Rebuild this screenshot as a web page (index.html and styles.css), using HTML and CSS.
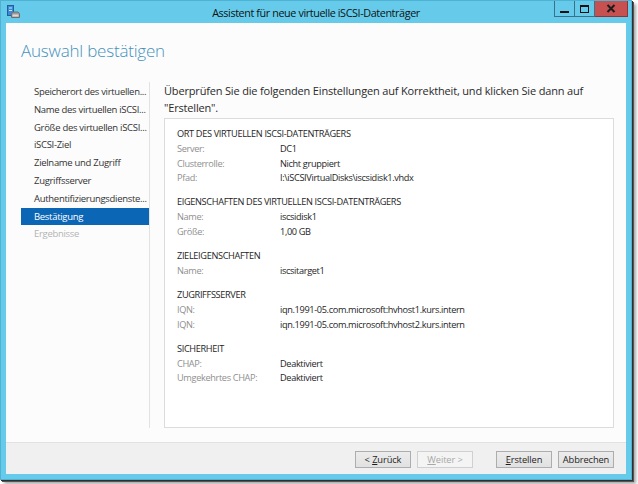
FILE: index.html
```html
<!DOCTYPE html>
<html lang="de">
<head>
<meta charset="utf-8">
<title>Assistent für neue virtuelle iSCSI-Datenträger</title>
<link rel="stylesheet" href="styles.css">
</head>
<body>
<div class="window">
  <div class="titlebar">
    <div class="tb-left">
      <svg class="app-icon" width="13" height="13" viewBox="0 0 13 13">
        <rect x="0.5" y="0.5" width="6" height="10" fill="#3b8ad6" stroke="#1f5f9e" stroke-width="1"/>
        <rect x="2" y="2.5" width="3" height="1" fill="#cfe6fb"/>
        <rect x="2" y="5" width="3" height="1" fill="#cfe6fb"/>
        <path d="M4.5 8.5 L6.5 7 H11 L12.5 8.5 V12.5 H4.5 Z" fill="#9a9a9a" stroke="#6e6e6e" stroke-width="1"/>
        <rect x="5.5" y="9.5" width="6" height="2" fill="#d9d9d9"/>
      </svg>
    </div>
    <div class="tb-title">Assistent für neue virtuelle iSCSI-Datenträger</div>
    <div class="tb-controls">
      <div class="ctl ctl-min"><span class="glyph-min"></span></div>
      <div class="ctl ctl-max"><span class="glyph-max"></span></div>
      <div class="ctl ctl-close">
        <svg width="10" height="9" viewBox="0 0 10 9"><path d="M1.5 1 L8.5 8 M8.5 1 L1.5 8" stroke="#1c1c1c" stroke-width="2"/></svg>
      </div>
    </div>
  </div>
  <div class="client">
    <h1 class="page-title">Auswahl bestätigen</h1>
    <div class="main">
      <nav class="steps">
        <div class="step">Speicherort des virtuellen...</div>
        <div class="step">Name des virtuellen iSCSI...</div>
        <div class="step">Größe des virtuellen iSCSI...</div>
        <div class="step">iSCSI-Ziel</div>
        <div class="step">Zielname und Zugriff</div>
        <div class="step">Zugriffsserver</div>
        <div class="step">Authentifizierungsdienste...</div>
        <div class="step active">Bestätigung</div>
        <div class="step disabled">Ergebnisse</div>
      </nav>
      <div class="divider"></div>
      <section class="content">
        <p class="intro">Überprüfen Sie die folgenden Einstellungen auf Korrektheit, und klicken Sie dann auf "Erstellen".</p>
        <div class="summary">
          <div class="group">
            <div class="group-head">ORT DES VIRTUELLEN ISCSI-DATENTRÄGERS</div>
            <div class="row"><span class="label">Server:</span><span class="value">DC1</span></div>
            <div class="row"><span class="label">Clusterrolle:</span><span class="value">Nicht gruppiert</span></div>
            <div class="row"><span class="label">Pfad:</span><span class="value">I:\iSCSIVirtualDisks\iscsidisk1.vhdx</span></div>
          </div>
          <div class="group">
            <div class="group-head">EIGENSCHAFTEN DES VIRTUELLEN ISCSI-DATENTRÄGERS</div>
            <div class="row"><span class="label">Name:</span><span class="value">iscsidisk1</span></div>
            <div class="row"><span class="label">Größe:</span><span class="value">1,00 GB</span></div>
          </div>
          <div class="group">
            <div class="group-head">ZIELEIGENSCHAFTEN</div>
            <div class="row"><span class="label">Name:</span><span class="value">iscsitarget1</span></div>
          </div>
          <div class="group">
            <div class="group-head">ZUGRIFFSSERVER</div>
            <div class="row"><span class="label">IQN:</span><span class="value">iqn.1991-05.com.microsoft:hvhost1.kurs.intern</span></div>
            <div class="row"><span class="label">IQN:</span><span class="value">iqn.1991-05.com.microsoft:hvhost2.kurs.intern</span></div>
          </div>
          <div class="group">
            <div class="group-head">SICHERHEIT</div>
            <div class="row"><span class="label">CHAP:</span><span class="value">Deaktiviert</span></div>
            <div class="row"><span class="label">Umgekehrtes CHAP:</span><span class="value">Deaktiviert</span></div>
          </div>
        </div>
      </section>
    </div>
    <div class="footer">
      <button class="btn">&lt; <u>Z</u>urück</button>
      <button class="btn btn-disabled"><u>W</u>eiter &gt;</button>
      <button class="btn btn-gap"><u>E</u>rstellen</button>
      <button class="btn">Abbrechen</button>
    </div>
  </div>
</div>
</body>
</html>
```

FILE: styles.css
```css
* { box-sizing: border-box; }

html, body {
  margin: 0;
  padding: 0;
  background: #ffffff;
}

body {
  width: 638px;
  height: 484px;
  overflow: hidden;
  font-family: "Open Sans", "Noto Sans", sans-serif;
  color: #1e1e1e;
}

.window {
  width: 632px;
  height: 480px;
  background: #66cbea;
  border: 1px solid #4fb2d2;
  box-shadow: 1px 1px 0 #2f2f2f, 2px 2px 0 #555555, 4px 4px 3px rgba(0, 0, 0, 0.35);
  display: flex;
  flex-direction: column;
}

.titlebar {
  height: 22px;
  display: grid;
  grid-template-columns: 1fr auto 1fr;
  align-items: start;
}

.tb-left {
  padding: 4px 0 0 6px;
}

.app-icon { display: block; }

.tb-title {
  font-size: 10.8px;
  line-height: 23px;
  color: #111111;
  white-space: nowrap;
  letter-spacing: -0.4px;
}

.tb-controls {
  display: flex;
  justify-content: flex-end;
  padding-right: 3px;
}

.ctl {
  height: 16px;
  display: flex;
  align-items: center;
  justify-content: center;
  border: 1px solid #3a7088;
  border-top: none;
}

.ctl-min { width: 21px; }
.ctl-max { width: 20px; border-left: none; }
.ctl-close {
  width: 33px;
  background: #c75050;
  border-color: #8d3535;
  border-left: none;
}

.glyph-min {
  display: block;
  width: 9px;
  height: 2px;
  background: #111;
  margin-top: 6px;
}

.glyph-max {
  display: block;
  width: 9px;
  height: 8px;
  border: 1px solid #111;
  border-top-width: 2px;
}

.client {
  flex: 1;
  margin: 0 5px 5px 5px;
  background: #fcfcfc;
  display: flex;
  flex-direction: column;
}

.page-title {
  margin: 0;
  padding: 16px 0 0 15px;
  height: 59px;
  font-size: 17px;
  font-weight: 300;
  line-height: 24px;
  color: #4592bc;
  letter-spacing: -0.2px;
}

.main {
  flex: 1;
  display: flex;
  min-height: 0;
}

.steps {
  width: 143px;
  padding: 1px 0 0 15px;
  font-size: 9.5px;
  letter-spacing: -0.3px;
}

.step {
  height: 17.8px;
  line-height: 17.8px;
  padding-left: 13px;
  color: #333333;
  white-space: nowrap;
}

.step.active {
  background: #0b66b5;
  color: #ffffff;
}

.step.disabled {
  color: #b4b4b4;
}

.divider {
  width: 1px;
  height: 346px;
  background: #e2e2e2;
}

.content {
  flex: 1;
  padding: 0 12px 0 14px;
  display: flex;
  flex-direction: column;
}

.intro {
  margin: 0;
  font-size: 11px;
  line-height: 17px;
  color: #2a2a2a;
  letter-spacing: -0.17px;
}

.summary {
  margin-top: 2px;
  height: 310px;
  border: 1px solid #dcdcdc;
  background: #ffffff;
  padding: 7px 0 0 12px;
  font-size: 9.2px;
  letter-spacing: -0.35px;
}

.group + .group { margin-top: 8.5px; }

.group-head {
  line-height: 15px;
  margin-bottom: 1px;
  color: #1e1e1e;
}

.row {
  display: flex;
  line-height: 14.6px;
}

.label {
  width: 103px;
  color: #8f8f8f;
}

.value {
  color: #1e1e1e;
}

.footer {
  height: 32px;
  background: #f0f0f0;
  border-top: 1px solid #e2e2e2;
  display: flex;
  justify-content: flex-end;
  align-items: flex-start;
  padding: 8px 12px 0 0;
  gap: 6px;
}

.btn {
  width: 56px;
  height: 17px;
  padding: 0;
  font-family: inherit;
  font-size: 9.3px;
  line-height: 15px;
  letter-spacing: -0.1px;
  color: #1e1e1e;
  background: linear-gradient(#ececec, #e1e1e1);
  border: 1px solid #adadad;
  border-radius: 0;
}

.btn u { text-decoration: underline; }

.btn-disabled {
  color: #a8a8a8;
  background: #f4f4f4;
  border-color: #d0d0d0;
}

.btn-gap { margin-left: 17px; }
```
